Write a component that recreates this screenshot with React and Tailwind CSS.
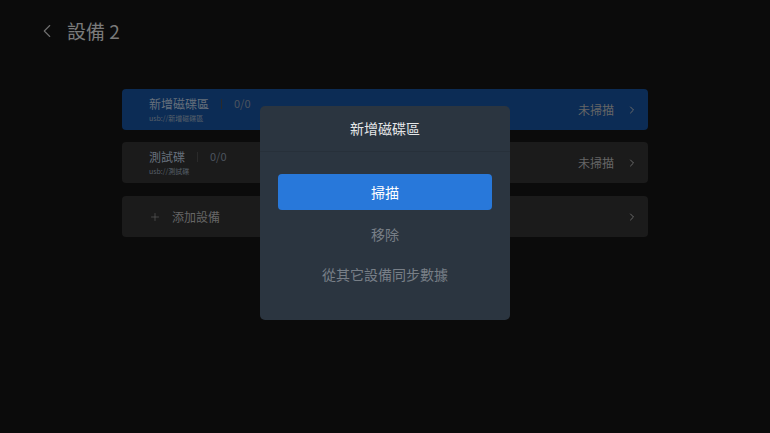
import { ChevronLeft, ChevronRight, Plus } from 'lucide-react'

const DISKS = [
  { name: '新增磁碟區', path: 'usb://新增磁碟區', count: '0/0', status: '未掃描', active: true },
  { name: '測試碟', path: 'usb://測試碟', count: '0/0', status: '未掃描', active: false },
]

const FONT = { fontFamily: '"Noto Sans CJK TC", "Noto Sans", Roboto, sans-serif' }

function DiskRow({ disk }) {
  return (
    <div
      className={`flex h-[41px] items-center rounded-[4px] pl-[27px] pr-[10px] ${
        disk.active ? 'bg-[#0c2c55]' : 'bg-[#1b1b1b]'
      }`}
    >
      <div className="flex flex-col leading-none">
        <div className="flex items-center">
          <span className="text-[12px] leading-[13px] text-[#67707b]">{disk.name}</span>
          <span className="mx-[12px] h-[10px] w-px bg-[#2a2a2a]" />
          <span className="text-[11px] leading-[13px] text-[#4c545e]">{disk.count}</span>
        </div>
        <span className="mt-[4px] text-[7px] leading-[8px] text-[#58606a]">{disk.path}</span>
      </div>
      <div className="ml-auto flex items-center gap-[12px]">
        <span className="text-[12px] text-[#666]">{disk.status}</span>
        <ChevronRight size={12} strokeWidth={2} className="text-[#6a6a6a]" />
      </div>
    </div>
  )
}

export default function App() {
  return (
    <div className="relative h-[433px] w-[770px] overflow-hidden bg-[#0b0b0b]" style={FONT}>
      {/* header */}
      <div className="flex items-center pl-[36px] pt-[19px]">
        <ChevronLeft size={22} strokeWidth={1.2} className="text-[#707070]" />
        <span className="ml-[9px] text-[19px] leading-[24px] text-[#7a7a7a]">設備 2</span>
      </div>

      {/* device list */}
      <div className="mx-[122px] mt-[46px] flex flex-col gap-[12px]">
        {DISKS.map((d) => (
          <DiskRow key={d.name} disk={d} />
        ))}
        <div className="mt-[1px] flex h-[41px] items-center rounded-[4px] bg-[#1b1b1b] pl-[27px] pr-[10px]">
          <Plus size={12} strokeWidth={1.5} className="text-[#555]" />
          <span className="ml-[11px] text-[12px] text-[#666]">添加設備</span>
          <ChevronRight size={12} strokeWidth={2} className="ml-auto text-[#6a6a6a]" />
        </div>
      </div>

      {/* action dialog */}
      <div className="absolute left-[260px] top-[106px] flex h-[214px] w-[250px] flex-col items-center rounded-[5px] bg-[#2b3540]">
        <div className="flex h-[46px] w-full items-center justify-center border-b border-[#27303a] text-[14px] text-[#e4e6e8]">
          新增磁碟區
        </div>
        <button className="mt-[22px] flex h-[36px] w-[214px] items-center justify-center rounded-[4px] bg-[#2878da] text-[14px] text-white">
          掃描
        </button>
        <div className="mt-[14px] text-[14px] text-[#787f87]">移除</div>
        <div className="mt-[19px] text-[14px] text-[#787f87]">從其它設備同步數據</div>
      </div>
    </div>
  )
}
